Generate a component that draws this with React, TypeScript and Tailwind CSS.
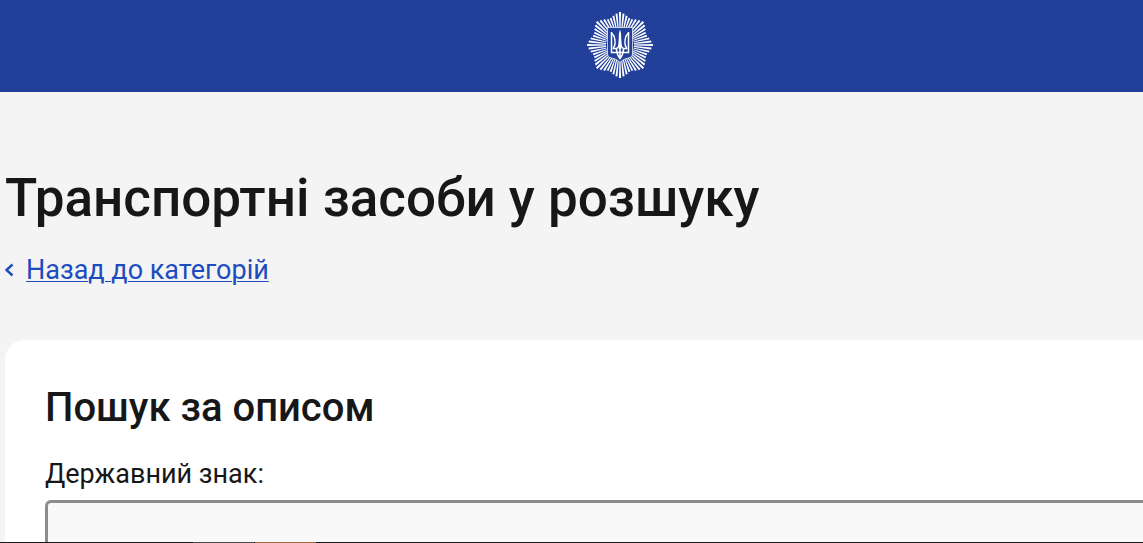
import React from 'react';

/*
|--------------------------------------------------------------------------
| EMBLEM
|--------------------------------------------------------------------------
*/
const RAY_COUNT = 56;

const rays = Array.from(
  { length: RAY_COUNT },
  (_, i) => {

    const angle = (i * 2 * Math.PI) / RAY_COUNT;

    // rays get shorter between the eight points of the star
    const step = Math.min(i % 7, 7 - (i % 7));
    const outer = 33 - step * 1.5;
    const half = 0.032;

    const point = (r: number, a: number) =>
      `${(r * Math.sin(a)).toFixed(2)} ${(-r * Math.cos(a)).toFixed(2)}`;

    return `M${point(14, angle - half)}L${point(outer, angle - half)}L${point(outer, angle + half)}L${point(14, angle + half)}Z`;
  }
);

function Emblem() {

  return (

    <svg
      viewBox="-33 -33 66 66"
      className="w-[66px] h-[66px]"
      aria-hidden="true"
    >

      <path d={rays.join('')} fill="#fff" />

      {/* SHIELD */}
      <path
        d="M-12.500-17.500H12.500V9Q12.500 12 10 12.500L5 14Q2 15 0 17.500Q-2 15-5 14L-10 12.500Q-12.500 12-12.500 9Z"
        fill="#22409a"
        stroke="#fff"
        strokeWidth="0.7"
      />

      {/* TRIDENT */}
      <g fill="none" stroke="#fff" strokeWidth="1.500" strokeLinejoin="miter">
        <path d="M-8.500-13V7.500H8.500V-13" />
        <path d="M-8.500-12C-5-9-4.700-5-5-1C-5.200 1-6.500 1.500-6.500 3.500H-4C-1.500 3.500-.5-1-.5-6" />
        <path d="M8.500-12C5-9 4.700-5 5-1C5.200 1 6.500 1.500 6.500 3.500H4C1.500 3.500 .5-1 .5-6" />
        <path d="M-3.500 4C-3.500 9-2 11 0 13.500C2 11 3.500 9 3.500 4M0 3V13" />
      </g>
      <path d="M0-15.500C1.400-12 1.300-8 1.100-5L1.300 4H-1.300L-1.100-5C-1.300-8-1.400-12 0-15.500Z" fill="#fff" />

    </svg>

  );
}

export default function WantedVehiclesPage() {

  return (

    <div className="h-screen overflow-hidden bg-[#f4f4f4] text-[#171717] font-[Roboto,sans-serif]">

      {/* HEADER */}
      <header className="bg-[#22409a] flex justify-center pt-3 pb-3.5 pl-24">

        <Emblem />

      </header>

      <main className="pl-[5px]">

        <h1 className="pt-[72px] text-[53px] leading-[68px] font-medium whitespace-nowrap">
          Транспортні засоби у розшуку
        </h1>

        {/* BACK LINK */}
        <div className="mt-5 flex items-center gap-3 text-[#1d4cbf]">

          <svg
            viewBox="0 0 9 14"
            className="w-[9px] h-[14px]"
            fill="none"
            stroke="currentColor"
            strokeWidth="2.400"
            aria-hidden="true"
          >
            <path d="M7.500 1.500L1.500 7L7.500 12.500" />
          </svg>

          <a
            href="#categories"
            className="text-[27px] leading-9 underline decoration-1 underline-offset-2"
          >
            Назад до категорій
          </a>

        </div>

        {/* SEARCH CARD */}
        <section className="mt-13 bg-white rounded-tl-[20px] pt-10 pl-10 pb-10">

          <h2 className="text-[40px] leading-14 font-medium">
            Пошук за описом
          </h2>

          <form className="mt-[18px]">

            <label
              htmlFor="plate"
              className="block text-[27px] leading-10"
            >
              Державний знак:
            </label>

            <input
              id="plate"
              type="text"
              name="plate"
              className="mt-1.5 block w-full h-20 px-6 bg-[#f9f9f9] border-3 border-r-0 border-[#8c8c8c] rounded-l-md text-[27px] outline-none"
            />

          </form>

        </section>

      </main>

      {/* BOTTOM EDGE */}
      <div className="fixed inset-x-0 bottom-0 h-px flex gap-px pl-[193px] bg-[#1b171b]">

        <div className="w-[61px] bg-[#4b4a4c]" />

        <div className="w-[61px] bg-[#a96532]" />

      </div>

    </div>
  );
}
